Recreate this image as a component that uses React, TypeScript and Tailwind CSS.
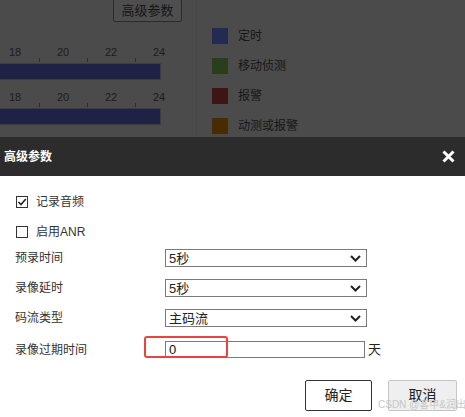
import { ReactNode } from "react";

const font = { fontFamily: '"Liberation Sans", "Noto Sans CJK SC", sans-serif' };

function TimelineRow({ first }: { first?: boolean }) {
    return (
        <div className={first ? "mt-[24px]" : "mt-[11px]"}>
            <div className="flex h-[12px] ml-[-9px] text-[11px] leading-[12px] text-[#1c1c1c]">
                {["18", "20", "22", "24"].map((n) => (
                    <div key={n} className="w-[48px] text-center">{n}</div>
                ))}
            </div>
            <div className="flex h-[5px] pl-[39px] gap-[47px]">
                <div className="w-px h-[4px] bg-[#2e2e2e]" />
                <div className="w-px h-[4px] bg-[#2e2e2e]" />
                <div className="w-px h-[4px] bg-[#2e2e2e]" />
            </div>
            <div className="w-[161px] h-[17px] bg-[#1e2345] border-r border-y border-[#3d3d3d]" />
        </div>
    );
}

function Legend({ color, label }: { color: string; label: string }) {
    return (
        <div className="flex items-center h-[16px]">
            <div className={`w-[16px] h-[16px] ${color}`} />
            <span className="ml-[10px] text-[12px] text-[#171717]">{label}</span>
        </div>
    );
}

function Row({ label, className, children }: { label: string; className: string; children: ReactNode }) {
    return (
        <div className={`flex items-center ${className}`}>
            <div className="w-[150px] text-[12px] text-[#333]">{label}</div>
            {children}
        </div>
    );
}

function FakeSelect({ value }: { value: string }) {
    return (
        <div className="w-[202px] h-[18px] border border-[#7a7a7a] flex items-center justify-between pl-[3px] pr-[5px] text-[13px] text-[#222]">
            <span className="leading-none">{value}</span>
            <svg width="11" height="7" viewBox="0 0 11 7">
                <path d="M1 1 L5.5 5.5 L10 1" fill="none" stroke="#222" strokeWidth="2" />
            </svg>
        </div>
    );
}

export default function App() {
    return (
        <div className="w-[465px] h-[417px] flex flex-col overflow-hidden relative bg-white" style={font}>
            {/* page behind the modal */}
            <div className="h-[137px] flex bg-[#4b4b4b] overflow-hidden">
                <div className="w-[197px] border-r border-[#474747] flex flex-col">
                    <div className="h-[22px] flex">
                        <div className="ml-[113px] mt-[-1px] w-[69px] h-[23px] border border-[#2b2b2b] rounded-[2px] bg-[#4e4e4e] flex items-center justify-center text-[13px] text-[#161616]">
                            高级参数
                        </div>
                    </div>
                    <TimelineRow first />
                    <TimelineRow />
                    <TimelineRow />
                </div>
                <div className="flex flex-col pl-[15px] pt-[28px] gap-[14px]">
                    <Legend color="bg-[#232a54]" label="定时" />
                    <Legend color="bg-[#2b3e1c]" label="移动侦测" />
                    <Legend color="bg-[#3d1515]" label="报警" />
                    <Legend color="bg-[#4a2b00]" label="动测或报警" />
                </div>
            </div>

            {/* dialog */}
            <div className="h-[39px] bg-[#2c2c2c] flex items-center justify-between pl-[4px] pr-[10px]">
                <span className="text-[12px] font-bold text-white">高级参数</span>
                <svg width="13" height="13" viewBox="0 0 13 13">
                    <path d="M1.5 1.5 L11.5 11.5 M11.5 1.5 L1.5 11.5" stroke="white" strokeWidth="3" />
                </svg>
            </div>
            <div className="flex-1 flex flex-col pl-[15px]">
                <div className="mt-[20px] h-[12px] flex items-center">
                    <div className="ml-[1px] w-[12px] h-[12px] border border-[#333] flex items-center justify-center">
                        <svg width="10" height="10" viewBox="0 0 10 10">
                            <path d="M1.5 5 L4 7.5 L8.8 2" fill="none" stroke="#222" strokeWidth="1.6" />
                        </svg>
                    </div>
                    <span className="ml-[8px] text-[12px] text-[#333]">记录音频</span>
                </div>
                <div className="mt-[18px] h-[12px] flex items-center">
                    <div className="ml-[1px] w-[12px] h-[12px] border border-[#333]" />
                    <span className="ml-[8px] text-[12px] text-[#333]">启用ANR</span>
                </div>
                <Row label="预录时间" className="mt-[11px] h-[18px]">
                    <FakeSelect value="5秒" />
                </Row>
                <Row label="录像延时" className="mt-[12px] h-[18px]">
                    <FakeSelect value="5秒" />
                </Row>
                <Row label="码流类型" className="mt-[12px] h-[18px]">
                    <FakeSelect value="主码流" />
                </Row>
                <Row label="录像过期时间" className="mt-[14px] h-[17px]">
                    <div className="w-[200px] h-[17px] border border-[#7a7a7a] pl-[3px] text-[13px] leading-[15px] text-[#111]">0</div>
                    <span className="ml-[3px] text-[13px] text-[#222]">天</span>
                </Row>
                <div className="mt-[22px] flex justify-end gap-[16px] pr-[8px]">
                    <button className="w-[67px] h-[31px] border border-[#333] rounded-[2px] bg-white text-[14px] text-[#222]">确定</button>
                    <button className="w-[69px] h-[31px] border border-[#c6c6c6] rounded-[2px] bg-[#efefef] text-[14px] text-[#222]">取消</button>
                </div>
            </div>

            {/* annotation overlays */}
            <div className="absolute left-[144px] top-[336px] w-[84px] h-[22px] border-2 border-[#e8453c] rounded-[3px]" />
            <div className="absolute left-[378px] top-[399px] whitespace-nowrap text-[10px] leading-[12px] text-[#c4c4c4] opacity-90">CSDN @客甲&润出</div>
        </div>
    );
}
